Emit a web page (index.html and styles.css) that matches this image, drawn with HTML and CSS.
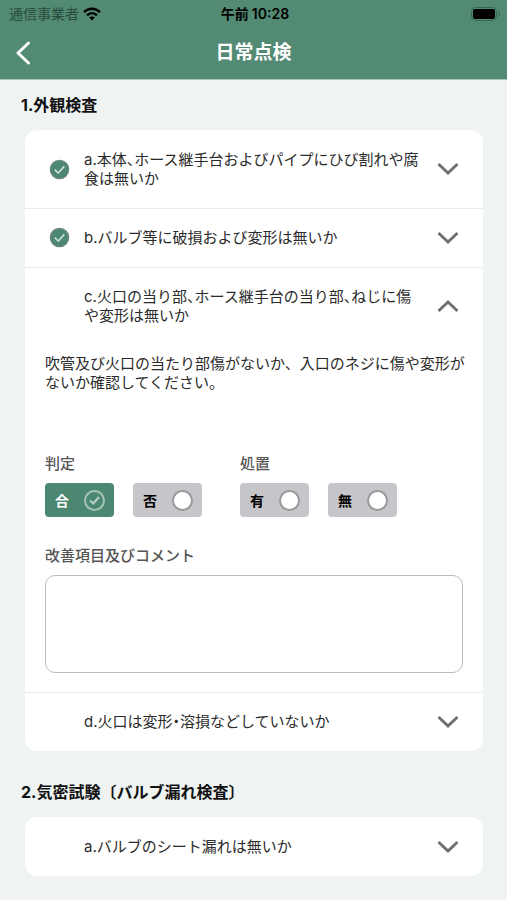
FILE: index.html
```html
<!DOCTYPE html>
<html lang="ja">
<head>
<meta charset="utf-8">
<meta name="viewport" content="width=device-width, initial-scale=1">
<title>日常点検</title>
<link rel="stylesheet" href="styles.css">
</head>
<body>
<svg class="defs" aria-hidden="true">
  <symbol id="chevron" viewBox="0 0 22 14"><path d="M1.500 2 11 11 20.500 2" fill="none" stroke="currentColor" stroke-width="3"/></symbol>
  <symbol id="done" viewBox="0 0 22 22"><circle cx="11" cy="11" r="9.5" fill="#4c8871" stroke="#69877b" stroke-width="1.5"/><path d="M6 11.200 9.700 14.700 16 7.700" fill="none" stroke="#c9ddd4" stroke-width="1.7"/></symbol>
</svg>
<header class="top">
  <div class="status">
    <div class="carrier">通信事業者
      <svg class="wifi" viewBox="0 0 18 14" aria-hidden="true"><g fill="none" stroke="#000" stroke-width="2.6"><path d="M1 5.2C5.5.6 12.500.6 17 5.200"/><path d="M4 8.400C6.900 5.500 11.100 5.500 14 8.400"/></g><path d="M9 13.500 6.200 10.500C7.800 9 10.200 9 11.800 10.500Z"/></svg>
    </div>
    <div class="time"><span>午前</span><span>10:28</span></div>
    <svg class="battery" viewBox="0 0 30 14" aria-hidden="true"><rect x=".5" y=".5" width="25" height="13" rx="4" fill="none" stroke="#3b6654"/><rect x="2" y="2" width="22" height="10" rx="2"/><path d="M27.500 4.500C29.500 5.200 29.500 8.800 27.500 9.500Z" fill="#3b6654"/></svg>
  </div>
  <div class="nav">
    <button class="back" type="button" aria-label="戻る"><svg viewBox="0 0 16 24" aria-hidden="true"><path d="M12.500 2 2 12 12.500 22" fill="none" stroke="#fff" stroke-width="3" stroke-linecap="round" stroke-linejoin="round"/></svg></button>
    <h1>日常点検</h1>
  </div>
</header>
<main>
  <section>
    <h2>1.外観検査</h2>
    <div class="card">
      <button class="row" type="button"><svg class="mark" aria-hidden="true"><use href="#done"/></svg><span class="title">a.本体、ホース継手台およびパイプにひび割れや腐食は無いか</span><svg class="chevron" aria-hidden="true"><use href="#chevron"/></svg></button>
      <button class="row" type="button"><svg class="mark" aria-hidden="true"><use href="#done"/></svg><span class="title">b.バルブ等に破損および変形は無いか</span><svg class="chevron" aria-hidden="true"><use href="#chevron"/></svg></button>
      <div class="item">
        <button class="row" type="button" aria-expanded="true"><span class="mark"></span><span class="title">c.火口の当り部、ホース継手台の当り部、ねじに傷や変形は無いか</span><svg class="chevron up" aria-hidden="true"><use href="#chevron"/></svg></button>
        <div class="detail">
          <p>吹管及び火口の当たり部傷がないか、入口のネジに傷や変形がないか確認してください。</p>
          <div class="groups">
            <fieldset>
              <legend>判定</legend>
              <div class="options">
                <label class="option"><span>合</span><input type="radio" name="result" checked></label>
                <label class="option"><span>否</span><input type="radio" name="result"></label>
              </div>
            </fieldset>
            <fieldset>
              <legend>処置</legend>
              <div class="options">
                <label class="option"><span>有</span><input type="radio" name="action"></label>
                <label class="option"><span>無</span><input type="radio" name="action"></label>
              </div>
            </fieldset>
          </div>
          <label class="caption" for="comment">改善項目及びコメント</label>
          <textarea id="comment"></textarea>
        </div>
      </div>
      <button class="row" type="button"><span class="mark"></span><span class="title">d.火口は変形・溶損などしていないか</span><svg class="chevron" aria-hidden="true"><use href="#chevron"/></svg></button>
    </div>
  </section>
  <section>
    <h2>2.気密試験〔バルブ漏れ検査〕</h2>
    <div class="card">
      <button class="row" type="button"><span class="mark"></span><span class="title">a.バルブのシート漏れは無いか</span><svg class="chevron" aria-hidden="true"><use href="#chevron"/></svg></button>
    </div>
  </section>
</main>
</body>
</html>
```
FILE: styles.css
```css
* { box-sizing: border-box; }
body {
  margin: 0;
  background: #eff3f2;
  color: #2b2b2b;
  font: 15px/19px Inter, "Noto Sans CJK JP", sans-serif;
}
button { font: inherit; color: inherit; border: 0; background: none; padding: 0; }
svg { display: block; }
.defs { position: absolute; width: 0; height: 0; }
.top { background: #538a74; border-bottom: 1px solid #a5c6b8; }
.status {
  display: grid;
  grid-template-columns: 1fr auto 1fr;
  align-items: center;
  height: 27px;
  padding: 0 6px 0 9px;
  color: #000;
}
.carrier { display: flex; align-items: center; gap: 4px; font-size: 14px; color: #294c3d; }
.wifi { width: 18px; height: 14px; }
.time { display: flex; gap: 3px; font-size: 14px; font-weight: 600; }
.battery { width: 30px; height: 14px; justify-self: end; }
.nav {
  display: grid;
  grid-template-columns: 32px 1fr 32px;
  align-items: center;
  height: 52px;
  padding: 0 16px;
}
.back svg { width: 16px; height: 24px; }
h1 { margin: 0; color: #fff; font-size: 19px; line-height: 28px; font-weight: 600; text-align: center; }
section { padding: 13px 24px 0 25px; }
section + section { padding-top: 29px; }
h2 { margin: 0 0 13px -4px; font-size: 16px; line-height: 24px; font-weight: 700; color: #111; }
.card { background: #fff; border-radius: 12px; }
.card > * + * { box-shadow: inset 0 1px #eaecec; }
.row {
  display: flex;
  align-items: center;
  width: 100%;
  padding: 20px 24px;
  text-align: left;
}
.title { flex: 1; font-feature-settings: "halt"; }
.mark { flex: none; width: 21px; height: 21px; margin: -1px 14px -1px 0; }
.chevron { flex: none; width: 22px; height: 14px; margin-left: 14px; color: #707070; }
.up { transform: rotate(180deg); }
.detail { padding: 9px 20px 19px; }
.detail p { margin: 0 -4px 61px 0; }
.groups { display: flex; gap: 38px; margin-bottom: 28px; }
fieldset { border: 0; margin: 0; padding: 0; min-width: 0; }
legend, .caption { padding: 0; color: #555; font-weight: 500; line-height: 22px; }
legend { margin-bottom: 8px; }
.options { display: flex; gap: 19px; }
.option {
  display: flex;
  align-items: center;
  justify-content: space-between;
  width: 69px;
  height: 34px;
  padding: 0 9px 0 10px;
  border-radius: 4px;
  background: #c6c6ca;
  color: #000;
  font-size: 14px;
  font-weight: 700;
}
.option input {
  appearance: none;
  width: 21px;
  height: 21px;
  margin: 0;
  border: 2px solid #99999b;
  border-radius: 50%;
  background: #fff;
}
.option:has(:checked) { background: #4c8871; color: #fff; }
.option input:checked {
  border-color: #a5c4b7;
  background: url("data:image/svg+xml,%3Csvg xmlns='http://www.w3.org/2000/svg' viewBox='0 0 17 17'%3E%3Cpath d='M4 8.500 7.300 11.500 13 5' fill='none' stroke='%23b5cfc4' stroke-width='2'/%3E%3C/svg%3E") center / 17px no-repeat;
}
.caption { display: block; margin-bottom: 8px; }
textarea {
  display: block;
  width: 100%;
  height: 98px;
  padding: 10px;
  border: 1px solid #bcbcbc;
  border-radius: 10px;
  background: #fff;
  font: inherit;
  resize: none;
}
```
